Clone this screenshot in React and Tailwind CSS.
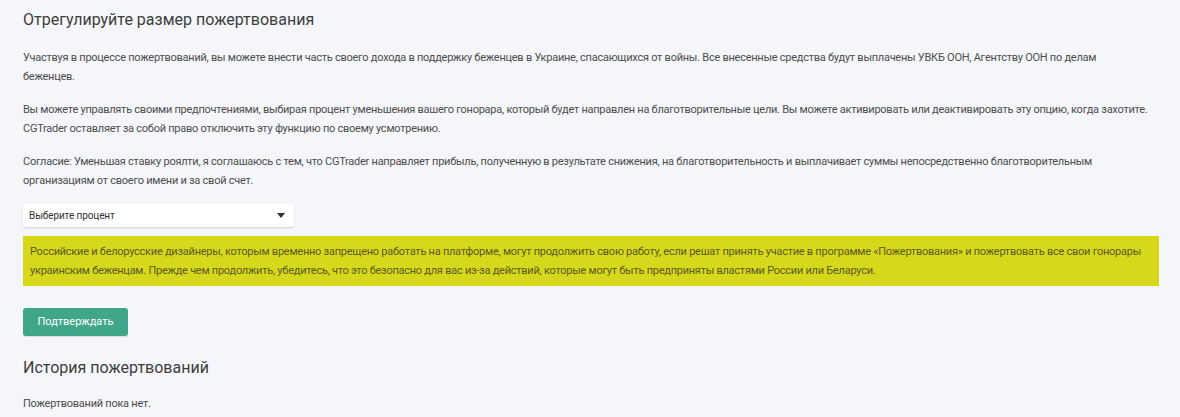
export default function App() {
  return (
    <div className="min-h-screen bg-[#f5f6fa] pl-[23px] pr-[21px] pt-[8px] text-[#4d4d4d] font-['Roboto',sans-serif]">
      <h2 className="text-[16px] leading-[24px] text-[#3d3d3d] mb-[16px]">
        Отрегулируйте размер пожертвования
      </h2>

      <p className="text-[11px] leading-[19px] tracking-[-0.25px] mb-[14px]">
        Участвуя в процессе пожертвований, вы можете внести часть своего дохода в поддержку беженцев в Украине, спасающихся от войны. Все внесенные средства будут выплачены УВКБ ООН, Агентству ООН по делам
        <br />
        беженцев.
      </p>
      <p className="text-[11px] leading-[19px] tracking-[-0.25px] mb-[14px]">
        Вы можете управлять своими предпочтениями, выбирая процент уменьшения вашего гонорара, который будет направлен на благотворительные цели. Вы можете активировать или деактивировать эту опцию, когда захотите. CGTrader оставляет за собой право отключить эту функцию по своему усмотрению.
      </p>
      <p className="text-[11px] leading-[19px] tracking-[-0.25px] mb-[14px]">
        Согласие: Уменьшая ставку роялти, я соглашаюсь с тем, что CGTrader направляет прибыль, полученную в результате снижения, на благотворительность и выплачивает суммы непосредственно благотворительным организациям от своего имени и за свой счет.
      </p>

      <div className="w-[271px] h-[23px] bg-white rounded-[2px] shadow-[0_1px_2px_rgba(0,0,0,0.15)] flex items-center justify-between pl-[6px] pr-[9px] mb-[9px]">
        <span className="text-[10px] tracking-[-0.1px] text-[#333]">Выберите процент</span>
        <svg width="8" height="5" viewBox="0 0 8 5">
          <path d="M0 0h8L4 5z" fill="#333" />
        </svg>
      </div>

      <div className="bg-[#d6d81c] px-[7px] py-[6px] text-[11px] leading-[19px] tracking-[-0.25px] text-[#5e5a23] mb-[22px]">
        Российские и белорусские дизайнеры, которым временно запрещено работать на платформе, могут продолжить свою работу, если решат принять участие в программе «Пожертвования» и пожертвовать все свои гонорары украинским беженцам. Прежде чем продолжить, убедитесь, что это безопасно для вас из-за действий, которые могут быть предприняты властями России или Беларуси.
      </div>

      <button className="bg-[#3fa68a] text-white text-[11px] rounded-[3px] w-[105px] h-[28px] shadow-[0_1px_1px_rgba(0,0,0,0.1)] mb-[20px] block">
        Подтверждать
      </button>

      <h2 className="text-[16px] leading-[24px] text-[#3d3d3d] mb-[14px]">
        История пожертвований
      </h2>
      <p className="text-[11px] leading-[19px] tracking-[-0.25px]">Пожертвований пока нет.</p>
    </div>
  );
}
